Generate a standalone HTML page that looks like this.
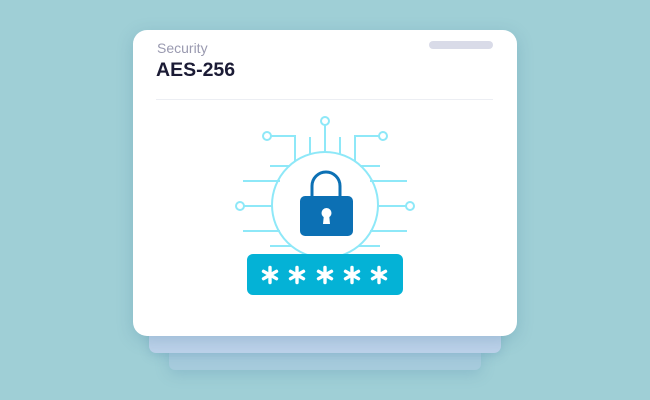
<!DOCTYPE html>
<html><head><style>
html,body{margin:0;padding:0;}
body{width:650px;height:400px;background:#9fcfd6;position:relative;overflow:hidden;font-family:"Liberation Sans",sans-serif;}
.l3{position:absolute;left:169px;top:330px;width:312px;height:40px;background:#a6cbdc;border-radius:6px;box-shadow:0 4px 14px rgba(80,130,170,.25);}
.l2{position:absolute;left:149px;top:320px;width:352px;height:33px;background:#bdd2ea;border-radius:7px;box-shadow:0 3px 10px rgba(80,130,170,.25);}
.card{position:absolute;left:133px;top:30px;width:384px;height:306px;background:#fff;border-radius:14px;box-shadow:0 4px 16px rgba(60,120,150,.25);}
.sec{position:absolute;left:24px;top:10px;font-size:14px;color:#9a9ab0;}
.ttl{position:absolute;left:23px;top:29px;font-size:19.5px;font-weight:bold;color:#1b1b35;}
.pill{position:absolute;left:296px;top:11px;width:64px;height:8px;border-radius:4px;background:#d9dbe8;}
.hr{position:absolute;left:23px;top:69px;width:337px;height:1px;background:#eceef3;}
</style></head><body>
<div class="l3"></div><div class="l2"></div>
<div class="card"><div class="sec">Security</div><div class="ttl">AES-256</div><div class="pill"></div><div class="hr"></div></div>
<svg style="position:absolute;left:0;top:0" width="650" height="400" viewBox="0 0 650 400">
<defs><g id="ast" stroke="#fff" stroke-width="3.4" stroke-linecap="round"><line x1="0" y1="-7.5" x2="0" y2="7.5"/><line x1="-6.5" y1="-3.7" x2="6.5" y2="3.7"/><line x1="-6.5" y1="3.7" x2="6.5" y2="-3.7"/></g></defs>
<g stroke="#8ee8f8" stroke-width="2" fill="none">
<circle cx="325" cy="205" r="53"/>
<circle cx="325" cy="121" r="4"/><line x1="325" y1="125" x2="325" y2="152"/>
<circle cx="267" cy="136" r="4"/><polyline points="271,136 295,136 295,162"/>
<circle cx="383" cy="136" r="4"/><polyline points="379,136 355,136 355,162"/>
<line x1="310" y1="137" x2="310" y2="155"/><line x1="340" y1="137" x2="340" y2="155"/>
<line x1="270" y1="166" x2="290" y2="166"/><line x1="380" y1="166" x2="360" y2="166"/>
<line x1="243" y1="181" x2="280" y2="181"/><line x1="407" y1="181" x2="370" y2="181"/>
<circle cx="240" cy="206" r="4"/><line x1="244" y1="206" x2="272" y2="206"/>
<circle cx="410" cy="206" r="4"/><line x1="406" y1="206" x2="378" y2="206"/>
<line x1="243" y1="231" x2="280" y2="231"/><line x1="407" y1="231" x2="370" y2="231"/>
<line x1="270" y1="246" x2="292" y2="246"/><line x1="380" y1="246" x2="358" y2="246"/>
</g>
<path d="M312 197 V186 a14 14 0 0 1 28 0 V197" stroke="#0c70b4" stroke-width="3" fill="none"/>
<rect x="300" y="196" width="53" height="40" rx="5" fill="#0c70b4"/>
<circle cx="326.5" cy="213" r="5" fill="#fff"/><path d="M324 214 L323 224 H330 L329 214Z" fill="#fff"/>
<rect x="247" y="254" width="156" height="41" rx="6" fill="#04b2d6"/>
<use href="#ast" x="270" y="275"/><use href="#ast" x="297" y="275"/><use href="#ast" x="325" y="275"/><use href="#ast" x="352" y="275"/><use href="#ast" x="379" y="275"/>
</svg>
</body></html>
